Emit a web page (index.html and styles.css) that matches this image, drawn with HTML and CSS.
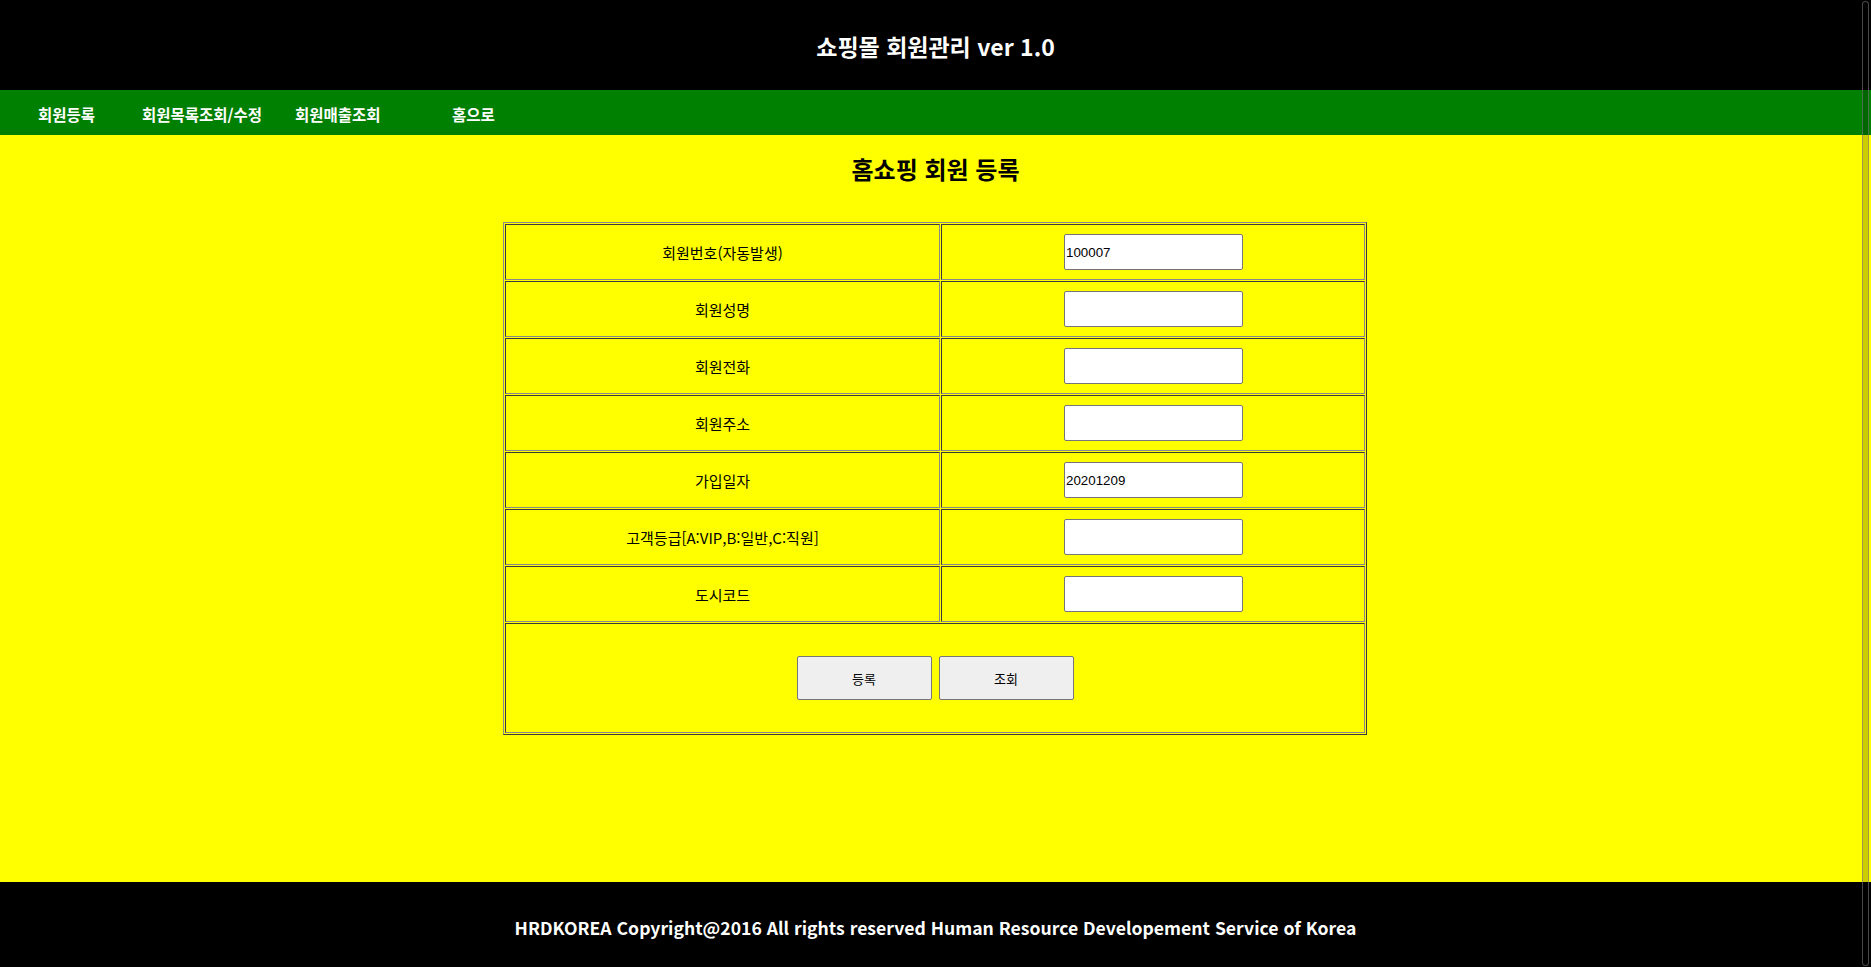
FILE: index.html
```html
<!DOCTYPE html>
<html lang="ko">
<head>
<meta charset="utf-8">
<title>쇼핑몰 회원관리</title>
<link rel="stylesheet" href="styles.css">
</head>
<body>
<header class="top">
  <h1 class="brand">쇼핑몰 회원관리 ver 1.0</h1>
</header>
<nav class="menu">
  <a class="menu-item item-join" href="#">회원등록</a>
  <a class="menu-item item-list" href="#">회원목록조회/수정</a>
  <a class="menu-item item-sales" href="#">회원매출조회</a>
  <a class="menu-item item-home" href="#">홈으로</a>
</nav>
<main class="content">
  <h2 class="page-title">홈쇼핑 회원 등록</h2>
  <form class="reg-form">
    <table class="reg">
      <tr><td class="label">회원번호(자동발생)</td><td class="field"><input class="txt" type="text" value="100007"></td></tr>
      <tr><td class="label">회원성명</td><td class="field"><input class="txt" type="text"></td></tr>
      <tr><td class="label">회원전화</td><td class="field"><input class="txt" type="text"></td></tr>
      <tr><td class="label">회원주소</td><td class="field"><input class="txt" type="text"></td></tr>
      <tr><td class="label">가입일자</td><td class="field"><input class="txt" type="text" value="20201209"></td></tr>
      <tr><td class="label">고객등급[A:VIP,B:일반,C:직원]</td><td class="field"><input class="txt" type="text"></td></tr>
      <tr><td class="label">도시코드</td><td class="field"><input class="txt" type="text"></td></tr>
      <tr><td class="actions-cell" colspan="2">
        <div class="actions">
          <button class="btn" type="button">등록</button>
          <button class="btn" type="button">조회</button>
        </div>
      </td></tr>
    </table>
  </form>
</main>
<footer class="bottom">HRDKOREA Copyright@2016 All rights reserved Human Resource Developement Service of Korea</footer>
<div class="scroll-thumb"></div>
</body>
</html>
```
FILE: styles.css
```css
html, body {
  margin: 0;
  padding: 0;
}
body {
  font-family: "Noto Sans CJK KR", "Noto Sans", sans-serif;
  color: #000;
  background: #ffff00;
  overflow: hidden;
}
.top {
  height: 90px;
  background: #000;
  display: flex;
  align-items: center;
  justify-content: center;
  box-sizing: border-box;
  padding-top: 1px;
}
.brand {
  margin: 0;
  color: #fff;
  font-size: 23px;
  font-weight: bold;
  line-height: 30px;
}
.menu {
  height: 45px;
  background: #008000;
  display: flex;
  align-items: center;
  box-sizing: border-box;
  padding-left: 38px;
  padding-top: 3px;
}
.menu-item {
  color: #fff;
  text-decoration: none;
  font-weight: bold;
  font-size: 15.5px;
  line-height: 20px;
}
.item-join { width: 104px; }
.item-list { width: 153px; }
.item-sales { width: 157px; }
.content {
  height: 747px;
  background: #ffff00;
  box-sizing: border-box;
  padding-top: 19px;
}
.page-title {
  margin: 0 0 38px;
  text-align: center;
  font-size: 24px;
  font-weight: bold;
  line-height: 30px;
}
.reg-form {
  margin: 0;
  padding-right: 1px;
}
.reg {
  width: 864px;
  margin: 0 auto;
  border: 1px solid;
  border-color: #8a8a8a #3a3a3a #3a3a3a #8a8a8a;
  border-spacing: 1px;
}
.reg td {
  box-sizing: border-box;
  height: 56px;
  padding: 0;
  border: 1px solid;
  border-color: #3a3a3a #8a8a8a #8a8a8a #3a3a3a;
  text-align: center;
  vertical-align: middle;
}
.reg td.label {
  width: 435px;
  font-size: 15px;
  line-height: 18px;
  padding-top: 1px;
}
.reg td.actions-cell {
  height: 110px;
}
.txt {
  box-sizing: border-box;
  width: 179px;
  height: 36px;
  margin: 0;
  padding: 1px 1px;
  border: 1px solid #767676;
  border-radius: 2px;
  background: #fff;
  font-family: "Liberation Sans", Arial, sans-serif;
  font-size: 13.33px;
  color: #000;
  display: block;
  margin-left: 122px;
}
.actions {
  display: flex;
  justify-content: center;
  gap: 7px;
}
.btn {
  box-sizing: border-box;
  width: 135px;
  height: 44px;
  margin: 0;
  padding: 0;
  background: #efefef;
  border: 1px solid #767676;
  border-radius: 2px;
  font-family: "Noto Sans CJK KR", sans-serif;
  font-size: 13px;
  color: #000;
}
.bottom {
  height: 85px;
  background: #000;
  color: #fff;
  display: flex;
  align-items: center;
  justify-content: center;
  box-sizing: border-box;
  padding-top: 6px;
  font-weight: bold;
  font-size: 17.6px;
  line-height: 24px;
}
.scroll-thumb {
  position: fixed;
  top: 1px;
  bottom: 1px;
  right: 2px;
  width: 7px;
  box-sizing: border-box;
  border: 1px solid rgba(120, 120, 120, 0.6);
  border-radius: 4px;
  background: rgba(0, 0, 0, 0.2);
}
```
